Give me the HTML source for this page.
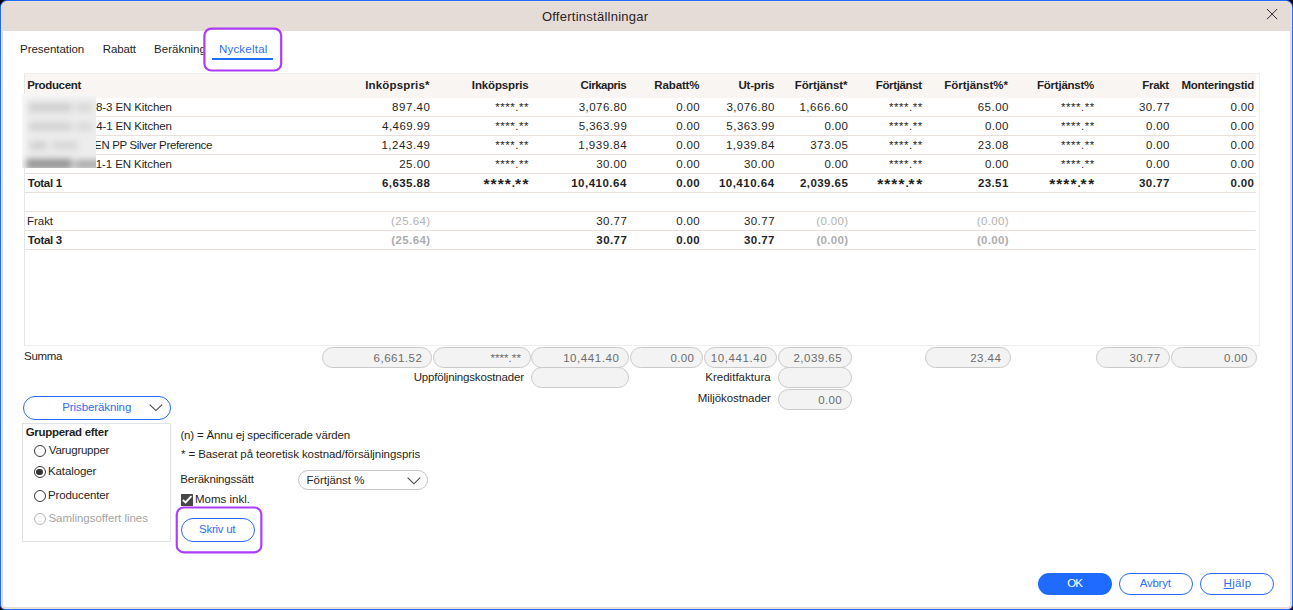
<!DOCTYPE html>
<html><head><meta charset="utf-8"><title>Offertinställningar</title>
<style>
html,body{margin:0;padding:0;}
body{width:1293px;height:610px;overflow:hidden;background:#000;position:relative;font-family:"Liberation Sans",sans-serif;font-size:11.5px;color:#1f1f24;}
div,span{box-sizing:border-box;}
.abs,.t,.rl,.pill{position:absolute;}
.t{white-space:pre;line-height:16px;height:16px;}
#win{left:0;top:0;width:1293px;height:610px;background:#1f6bff;border-radius:7px 7px 5px 5px;}
#frame{left:1px;top:1px;width:1291px;height:607.6px;background:#e6dcd7;border-radius:6px 6px 4px 4px;border:1px solid #f3e3d6;}
#content{left:3px;top:31px;width:1287px;height:576px;background:#fff;border-radius:0 0 3px 3px;}
#thead{left:25px;top:74px;width:1231px;height:24px;background:#f9f5f3;}
#tbox{left:24px;top:73px;width:1236px;height:273px;border:1px solid #efefef;border-left-color:#e6e6e6;}
.rl{left:25px;width:1231px;height:1px;background:#e9dfdb;}
.pill{border:1px solid #c9c9c9;background:#f3f3f3;border-radius:11px;}
.hl{border:2px solid #a93bf2;border-radius:9px;}
.btn{border:1px solid #2468fa;border-radius:12px;background:#fff;}
.radio{width:12px;height:12px;border:1px solid #3a3a3a;border-radius:50%;background:#fff;}
</style></head><body>
<div id="win" class="abs"></div>
<div id="frame" class="abs"></div>
<div id="content" class="abs"></div>

<!-- close X -->
<svg class="abs" style="left:1262px;top:4px" width="20" height="20" viewBox="0 0 20 20"><path d="M5 5 L15.2 15.2 M15.2 5 L5 15.2" stroke="#2b1b2b" stroke-width="0.95" fill="none"/></svg>

<!-- tab highlight + underline -->
<svg class="abs" style="left:200px;top:24px;z-index:2" width="90" height="52" viewBox="0 0 90 52"><rect x="4.4" y="4.6" width="76.8" height="41.9" rx="7" ry="7" fill="#fff" stroke="#ab3cfb" stroke-width="2.2"/></svg>
<div class="abs" style="left:212.2px;top:58px;width:60.8px;height:2px;background:#1f6bff;z-index:3"></div>

<!-- table -->
<div id="tbox" class="abs"></div>
<div id="thead" class="abs"></div>
<div class="rl" style="top:116px"></div><div class="rl" style="top:135px"></div><div class="rl" style="top:154px"></div><div class="rl" style="top:173px"></div><div class="rl" style="top:192px"></div><div class="rl" style="top:211px"></div><div class="rl" style="top:230px"></div><div class="rl" style="top:249px"></div>

<!-- blur patch -->
<div class="abs" style="left:22px;top:94px;width:74px;height:73.7px;background:#fbfbfb;overflow:hidden;z-index:3">
  <div class="abs" style="left:1.5px;top:1.5px;width:100px;height:100px;background:#ededed;filter:blur(3.3px)">
    <div class="abs" style="left:5px;top:7px;width:43px;height:9px;background:#d0d0d0"></div>
    <div class="abs" style="left:52px;top:7px;width:16px;height:9px;background:#d8d8d8"></div>
    <div class="abs" style="left:5px;top:26px;width:43px;height:9px;background:#d4d4d4"></div>
    <div class="abs" style="left:52px;top:26px;width:16px;height:9px;background:#dadada"></div>
    <div class="abs" style="left:6px;top:45px;width:17px;height:9px;background:#d2d2d2"></div>
    <div class="abs" style="left:28px;top:45px;width:26px;height:9px;background:#d8d8d8"></div>
    <div class="abs" style="left:2px;top:63px;width:46px;height:10.5px;background:#949494"></div>
    <div class="abs" style="left:51px;top:64px;width:40px;height:9.5px;background:#ababab"></div>
  </div>
</div>

<!-- pills -->
<div class="pill" style="left:322px;top:347px;width:109.5px;height:20.6px"></div><div class="pill" style="left:433px;top:347px;width:97.5px;height:20.6px"></div><div class="pill" style="left:531.3px;top:347px;width:97.3px;height:20.6px"></div><div class="pill" style="left:630px;top:347px;width:73.2px;height:20.6px"></div><div class="pill" style="left:703.6px;top:347px;width:73.1px;height:20.6px"></div><div class="pill" style="left:778.3px;top:347px;width:73.5px;height:20.6px"></div><div class="pill" style="left:925.3px;top:347px;width:85.5px;height:20.6px"></div><div class="pill" style="left:1096px;top:347px;width:73.5px;height:20.6px"></div><div class="pill" style="left:1170.6px;top:347px;width:86.0px;height:20.6px"></div><div class="pill" style="left:531.3px;top:367.2px;width:97.3px;height:20.8px"></div><div class="pill" style="left:778.3px;top:367.2px;width:73.5px;height:20.8px"></div><div class="pill" style="left:778.3px;top:389.3px;width:73.5px;height:20.7px"></div>

<!-- Prisberäkning dropdown button -->
<div class="abs btn" style="left:23px;top:396px;width:148px;height:24px;border-radius:12px"></div>
<svg class="abs" style="left:147px;top:401px" width="18" height="13" viewBox="0 0 18 13"><path d="M2.7 3.6 L8.9 9.6 L15.1 3.6" stroke="#444" stroke-width="1.1" fill="none"/></svg>

<!-- group box -->
<div class="abs" style="left:22px;top:423px;width:149px;height:119px;border:1px solid #e1e1e1;background:#fff"></div>
<div class="abs radio" style="left:33.6px;top:445px"></div>
<div class="abs radio" style="left:33.6px;top:466px"></div>
<div class="abs" style="left:36.4px;top:468.8px;width:6.4px;height:6.4px;border-radius:50%;background:#333"></div>
<div class="abs radio" style="left:33.6px;top:489.9px"></div>
<div class="abs radio" style="left:33.6px;top:513.1px;border-color:#b5b5b5"></div>

<!-- combo -->
<div class="abs" style="left:298px;top:470px;width:130.3px;height:20px;border:1px solid #c6c6c6;border-radius:10px;background:#fff"></div>
<svg class="abs" style="left:404px;top:474px" width="20" height="14" viewBox="0 0 20 14"><path d="M3.6 3.6 L9.9 9.8 L16.2 3.6" stroke="#444" stroke-width="1.1" fill="none"/></svg>

<!-- checkbox -->
<div class="abs" style="left:180.7px;top:493.8px;width:12px;height:12px;background:#464646;border-radius:0.5px"></div>
<svg class="abs" style="left:180.7px;top:493.8px" width="12" height="12" viewBox="0 0 12 12"><path d="M1.9 6.0 L4.6 8.5 L10.4 2.1" stroke="#fff" stroke-width="1.9" fill="none"/></svg>

<!-- Skriv ut -->
<svg class="abs" style="left:172px;top:504px;z-index:2" width="96" height="54" viewBox="0 0 96 54"><rect x="4.75" y="3.5" width="84.6" height="44.9" rx="7" ry="7" fill="#fff" stroke="#ab3cfb" stroke-width="2.15"/></svg>
<div class="abs btn" style="left:180.8px;top:518px;width:74.6px;height:23.6px;z-index:3"></div>

<!-- bottom buttons -->
<div class="abs" style="left:1037.6px;top:573px;width:74.4px;height:22.2px;border-radius:11.1px;background:#1f6bff"></div>
<div class="abs btn" style="left:1119px;top:573px;width:74px;height:22.2px"></div>
<div class="abs btn" style="left:1199.8px;top:573px;width:74.2px;height:22.2px"></div>

<span class="t" style="left:541.89px;top:8.50px;font-size:13px;color:#2a2326;letter-spacing:0.252px;">Offertinställningar</span>
<span class="t" style="left:20.10px;top:41.00px;letter-spacing:-0.048px;">Presentation</span>
<span class="t" style="left:102.80px;top:41.00px;letter-spacing:-0.147px;">Rabatt</span>
<span class="t" style="left:154.10px;top:41.00px;letter-spacing:0.002px;">Beräkning</span>
<span class="t" style="left:218.90px;top:40.80px;color:#2f6df6;z-index:4;letter-spacing:0.225px;">Nyckeltal</span>
<span class="t" style="left:27.15px;top:77.00px;font-weight:700;letter-spacing:-0.348px;">Producent</span>
<span class="t" style="left:365.15px;top:77.00px;font-weight:700;letter-spacing:0.170px;">Inköpspris*</span>
<span class="t" style="left:471.85px;top:77.00px;font-weight:700;letter-spacing:-0.140px;">Inköpspris</span>
<span class="t" style="left:580.55px;top:77.00px;font-weight:700;letter-spacing:-0.458px;">Cirkapris</span>
<span class="t" style="left:654.35px;top:77.00px;font-weight:700;letter-spacing:-0.147px;">Rabatt%</span>
<span class="t" style="left:738.45px;top:77.00px;font-weight:700;letter-spacing:-0.177px;">Ut-pris</span>
<span class="t" style="left:794.75px;top:77.00px;font-weight:700;letter-spacing:-0.105px;">Förtjänst*</span>
<span class="t" style="left:875.75px;top:77.00px;font-weight:700;letter-spacing:-0.352px;">Förtjänst</span>
<span class="t" style="left:944.15px;top:77.00px;font-weight:700;letter-spacing:-0.007px;">Förtjänst%*</span>
<span class="t" style="left:1037.05px;top:77.00px;font-weight:700;letter-spacing:-0.244px;">Förtjänst%</span>
<span class="t" style="left:1142.25px;top:77.00px;font-weight:700;letter-spacing:-0.310px;">Frakt</span>
<span class="t" style="left:1181.45px;top:77.00px;font-weight:700;letter-spacing:-0.270px;">Monteringstid</span>
<span class="t" style="left:96.00px;top:99.00px;letter-spacing:-0.108px;">8-3 EN Kitchen</span>
<span class="t" style="left:392.10px;top:99.00px;letter-spacing:0.534px;">897.40</span>
<span class="t" style="left:495.35px;top:99.00px;letter-spacing:0.513px;">****.**</span>
<span class="t" style="left:578.70px;top:99.00px;letter-spacing:0.469px;">3,076.80</span>
<span class="t" style="left:676.30px;top:99.00px;letter-spacing:0.321px;">0.00</span>
<span class="t" style="left:726.40px;top:99.00px;letter-spacing:0.469px;">3,076.80</span>
<span class="t" style="left:799.45px;top:99.00px;letter-spacing:0.533px;">1,666.60</span>
<span class="t" style="left:889.05px;top:99.00px;letter-spacing:0.513px;">****.**</span>
<span class="t" style="left:977.75px;top:99.00px;letter-spacing:0.479px;">65.00</span>
<span class="t" style="left:1061.05px;top:99.00px;letter-spacing:0.513px;">****.**</span>
<span class="t" style="left:1138.90px;top:99.00px;letter-spacing:0.467px;">30.77</span>
<span class="t" style="left:1230.60px;top:99.00px;letter-spacing:0.321px;">0.00</span>
<span class="t" style="left:96.25px;top:118.00px;letter-spacing:-0.127px;">4-1 EN Kitchen</span>
<span class="t" style="left:382.05px;top:118.00px;letter-spacing:0.454px;">4,469.99</span>
<span class="t" style="left:495.35px;top:118.00px;letter-spacing:0.513px;">****.**</span>
<span class="t" style="left:578.65px;top:118.00px;letter-spacing:0.483px;">5,363.99</span>
<span class="t" style="left:676.30px;top:118.00px;letter-spacing:0.321px;">0.00</span>
<span class="t" style="left:726.35px;top:118.00px;letter-spacing:0.483px;">5,363.99</span>
<span class="t" style="left:824.60px;top:118.00px;letter-spacing:0.321px;">0.00</span>
<span class="t" style="left:889.05px;top:118.00px;letter-spacing:0.513px;">****.**</span>
<span class="t" style="left:985.10px;top:118.00px;letter-spacing:0.321px;">0.00</span>
<span class="t" style="left:1061.05px;top:118.00px;letter-spacing:0.513px;">****.**</span>
<span class="t" style="left:1146.10px;top:118.00px;letter-spacing:0.321px;">0.00</span>
<span class="t" style="left:1230.60px;top:118.00px;letter-spacing:0.321px;">0.00</span>
<span class="t" style="left:94.10px;top:137.00px;letter-spacing:-0.342px;">EN PP Silver Preference</span>
<span class="t" style="left:381.45px;top:137.00px;letter-spacing:0.540px;">1,243.49</span>
<span class="t" style="left:495.35px;top:137.00px;letter-spacing:0.513px;">****.**</span>
<span class="t" style="left:578.25px;top:137.00px;letter-spacing:0.512px;">1,939.84</span>
<span class="t" style="left:676.30px;top:137.00px;letter-spacing:0.321px;">0.00</span>
<span class="t" style="left:725.95px;top:137.00px;letter-spacing:0.512px;">1,939.84</span>
<span class="t" style="left:810.20px;top:137.00px;letter-spacing:0.514px;">373.05</span>
<span class="t" style="left:889.05px;top:137.00px;letter-spacing:0.513px;">****.**</span>
<span class="t" style="left:977.75px;top:137.00px;letter-spacing:0.492px;">23.08</span>
<span class="t" style="left:1061.05px;top:137.00px;letter-spacing:0.513px;">****.**</span>
<span class="t" style="left:1146.10px;top:137.00px;letter-spacing:0.321px;">0.00</span>
<span class="t" style="left:1230.60px;top:137.00px;letter-spacing:0.321px;">0.00</span>
<span class="t" style="left:95.65px;top:156.00px;letter-spacing:-0.081px;">1-1 EN Kitchen</span>
<span class="t" style="left:399.25px;top:156.00px;letter-spacing:0.479px;">25.00</span>
<span class="t" style="left:495.35px;top:156.00px;letter-spacing:0.513px;">****.**</span>
<span class="t" style="left:596.20px;top:156.00px;letter-spacing:0.442px;">30.00</span>
<span class="t" style="left:676.30px;top:156.00px;letter-spacing:0.321px;">0.00</span>
<span class="t" style="left:743.90px;top:156.00px;letter-spacing:0.442px;">30.00</span>
<span class="t" style="left:824.60px;top:156.00px;letter-spacing:0.321px;">0.00</span>
<span class="t" style="left:889.05px;top:156.00px;letter-spacing:0.513px;">****.**</span>
<span class="t" style="left:985.10px;top:156.00px;letter-spacing:0.321px;">0.00</span>
<span class="t" style="left:1061.05px;top:156.00px;letter-spacing:0.513px;">****.**</span>
<span class="t" style="left:1146.10px;top:156.00px;letter-spacing:0.321px;">0.00</span>
<span class="t" style="left:1230.60px;top:156.00px;letter-spacing:0.321px;">0.00</span>
<span class="t" style="left:27.80px;top:175.00px;font-weight:700;letter-spacing:-0.319px;">Total 1</span>
<span class="t" style="left:381.90px;top:175.00px;font-weight:700;letter-spacing:0.454px;">6,635.88</span>
<span class="t" style="left:483.50px;top:176.20px;font-size:15.5px;font-weight:700;letter-spacing:1.050px;">****</span>
<span class="t" style="left:511.75px;top:175.00px;font-weight:700;letter-spacing:-0.120px;">.</span>
<span class="t" style="left:514.90px;top:176.20px;font-size:15.5px;font-weight:700;letter-spacing:1.513px;">**</span>
<span class="t" style="left:571.20px;top:175.00px;font-weight:700;letter-spacing:0.498px;">10,410.64</span>
<span class="t" style="left:676.25px;top:175.00px;font-weight:700;letter-spacing:0.338px;">0.00</span>
<span class="t" style="left:718.90px;top:175.00px;font-weight:700;letter-spacing:0.498px;">10,410.64</span>
<span class="t" style="left:799.95px;top:175.00px;font-weight:700;letter-spacing:0.440px;">2,039.65</span>
<span class="t" style="left:877.20px;top:176.20px;font-size:15.5px;font-weight:700;letter-spacing:1.050px;">****</span>
<span class="t" style="left:905.45px;top:175.00px;font-weight:700;letter-spacing:-0.120px;">.</span>
<span class="t" style="left:908.60px;top:176.20px;font-size:15.5px;font-weight:700;letter-spacing:1.513px;">**</span>
<span class="t" style="left:977.95px;top:175.00px;font-weight:700;letter-spacing:0.392px;">23.51</span>
<span class="t" style="left:1049.20px;top:176.20px;font-size:15.5px;font-weight:700;letter-spacing:1.050px;">****</span>
<span class="t" style="left:1077.45px;top:175.00px;font-weight:700;letter-spacing:-0.120px;">.</span>
<span class="t" style="left:1080.60px;top:176.20px;font-size:15.5px;font-weight:700;letter-spacing:1.513px;">**</span>
<span class="t" style="left:1139.05px;top:175.00px;font-weight:700;letter-spacing:0.417px;">30.77</span>
<span class="t" style="left:1230.55px;top:175.00px;font-weight:700;letter-spacing:0.338px;">0.00</span>
<span class="t" style="left:27.00px;top:213.00px;letter-spacing:-0.037px;">Frakt</span>
<span class="t" style="left:391.10px;top:213.00px;color:#b3b3b3;letter-spacing:0.440px;">(25.64)</span>
<span class="t" style="left:596.20px;top:213.00px;letter-spacing:0.467px;">30.77</span>
<span class="t" style="left:676.30px;top:213.00px;letter-spacing:0.321px;">0.00</span>
<span class="t" style="left:743.90px;top:213.00px;letter-spacing:0.467px;">30.77</span>
<span class="t" style="left:816.30px;top:213.00px;color:#b3b3b3;letter-spacing:0.368px;">(0.00)</span>
<span class="t" style="left:976.80px;top:213.00px;color:#b3b3b3;letter-spacing:0.368px;">(0.00)</span>
<span class="t" style="left:27.80px;top:232.00px;font-weight:700;letter-spacing:-0.302px;">Total 3</span>
<span class="t" style="left:391.25px;top:232.00px;font-weight:700;color:#adadad;letter-spacing:0.390px;">(25.64)</span>
<span class="t" style="left:596.35px;top:232.00px;font-weight:700;letter-spacing:0.417px;">30.77</span>
<span class="t" style="left:676.25px;top:232.00px;font-weight:700;letter-spacing:0.338px;">0.00</span>
<span class="t" style="left:744.05px;top:232.00px;font-weight:700;letter-spacing:0.417px;">30.77</span>
<span class="t" style="left:816.45px;top:232.00px;font-weight:700;color:#adadad;letter-spacing:0.308px;">(0.00)</span>
<span class="t" style="left:976.95px;top:232.00px;font-weight:700;color:#adadad;letter-spacing:0.308px;">(0.00)</span>
<span class="t" style="left:24.00px;top:348.00px;letter-spacing:-0.281px;">Summa</span>
<span class="t" style="left:413.65px;top:368.80px;letter-spacing:-0.173px;">Uppföljningskostnader</span>
<span class="t" style="left:705.20px;top:368.80px;letter-spacing:0.025px;">Kreditfaktura</span>
<span class="t" style="left:697.80px;top:389.60px;letter-spacing:-0.082px;">Miljökostnader</span>
<span class="t" style="left:62.30px;top:398.80px;color:#2f6df6;letter-spacing:-0.110px;">Prisberäkning</span>
<span class="t" style="left:25.65px;top:423.80px;font-weight:700;letter-spacing:-0.295px;">Grupperad efter</span>
<span class="t" style="left:48.85px;top:442.00px;letter-spacing:-0.255px;">Varugrupper</span>
<span class="t" style="left:48.00px;top:462.60px;letter-spacing:-0.106px;">Kataloger</span>
<span class="t" style="left:48.00px;top:486.60px;letter-spacing:-0.127px;">Producenter</span>
<span class="t" style="left:48.40px;top:509.80px;color:#a4a4a4;letter-spacing:-0.029px;">Samlingsoffert lines</span>
<span class="t" style="left:180.40px;top:427.20px;letter-spacing:-0.174px;">(n) = Ännu ej specificerade värden</span>
<span class="t" style="left:180.95px;top:445.70px;letter-spacing:-0.083px;">* = Baserat på teoretisk kostnad/försäljningspris</span>
<span class="t" style="left:180.30px;top:470.80px;letter-spacing:-0.179px;">Beräkningssätt</span>
<span class="t" style="left:306.60px;top:471.60px;letter-spacing:-0.038px;">Förtjänst %</span>
<span class="t" style="left:195.00px;top:491.00px;letter-spacing:0.010px;">Moms inkl.</span>
<span class="t" style="left:199.00px;top:520.90px;color:#2f6df6;z-index:4;letter-spacing:-0.257px;">Skriv ut</span>
<span class="t" style="left:1067.20px;top:575.20px;color:#ffffff;letter-spacing:-0.895px;">OK</span>
<span class="t" style="left:1139.70px;top:575.20px;color:#2f6df6;letter-spacing:-0.228px;">Avbryt</span>
<span class="t" style="left:1223.60px;top:575.20px;color:#2f6df6;letter-spacing:0.335px;"><u>H</u>jälp</span>
<span class="t" style="left:373.55px;top:350.00px;color:#6c6c6c;letter-spacing:0.504px;">6,661.52</span>
<span class="t" style="left:490.53px;top:350.00px;color:#6c6c6c;letter-spacing:0.050px;">****.**</span>
<span class="t" style="left:563.15px;top:350.00px;color:#6c6c6c;letter-spacing:0.567px;">10,441.40</span>
<span class="t" style="left:670.60px;top:350.00px;color:#6c6c6c;letter-spacing:0.321px;">0.00</span>
<span class="t" style="left:710.85px;top:350.00px;color:#6c6c6c;letter-spacing:0.567px;">10,441.40</span>
<span class="t" style="left:793.45px;top:350.00px;color:#6c6c6c;letter-spacing:0.490px;">2,039.65</span>
<span class="t" style="left:970.25px;top:350.00px;color:#6c6c6c;letter-spacing:0.442px;">23.44</span>
<span class="t" style="left:1129.40px;top:350.00px;color:#6c6c6c;letter-spacing:0.467px;">30.77</span>
<span class="t" style="left:1224.00px;top:350.00px;color:#6c6c6c;letter-spacing:0.321px;">0.00</span>
<span class="t" style="left:818.30px;top:392.00px;color:#6c6c6c;letter-spacing:0.321px;">0.00</span>
</body></html>
